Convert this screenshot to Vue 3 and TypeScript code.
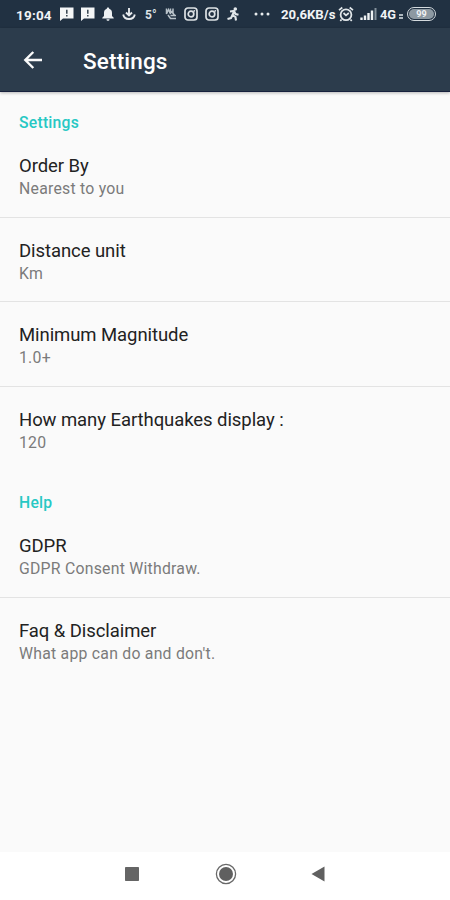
<script setup lang="ts">
interface Preference {
  title: string
  summary: string
}

interface Section {
  heading: string
  items: Preference[]
}

const sections: Section[] = [
  {
    heading: 'Settings',
    items: [
      { title: 'Order By', summary: 'Nearest to you' },
      { title: 'Distance unit', summary: 'Km' },
      { title: 'Minimum Magnitude', summary: '1.0+' },
      { title: 'How many Earthquakes display :', summary: '120' },
    ],
  },
  {
    heading: 'Help',
    items: [
      { title: 'GDPR', summary: 'GDPR Consent Withdraw.' },
      { title: 'Faq & Disclaimer', summary: "What app can do and don't." },
    ],
  },
]
</script>

<template>
  <div class="screen">
    <header class="status">
      <span class="slot clock"><span>19:04</span></span>
      <svg v-for="n in 2" :key="'c' + n" class="chat" viewBox="0 0 14 14">
        <path d="M0 .5h13.5v11H3L0 14z" fill="#f4f6f7" />
        <path d="M6.8 2.7v4M6.8 8v1.5" stroke="#33414d" stroke-width="1.5" />
      </svg>
      <svg class="bell" viewBox="0 0 12 14">
        <path d="M6 .5c.8 0 1.2.5 1.2 1.2C9.2 2.3 10 4 10 6v3l1.7 1.7v.8H.3v-.8L2 9V6c0-2 .8-3.7 2.8-4.3C4.800 1 5.200.5 6 .5zM4.500 12.200h3c0 1-.6 1.500-1.500 1.500s-1.500-.5-1.500-1.500z" fill="#eef1f3" />
      </svg>
      <svg class="anchor" viewBox="0 0 14 14">
        <path d="M7 1v7M4 5.5l3 3 3-3M1.200 7.500c.6 3 2.700 4.500 5.800 4.500s5.200-1.500 5.800-4.500" fill="none" stroke="#e6eaed" stroke-width="1.900" />
      </svg>
      <span class="slot degree"><span>5°</span></span>
      <svg class="vibrate" viewBox="0 0 12 14">
        <path d="M1.500 1.500V7l2-4.500L5.500 7V1.500M8 1.500V7M3 8l2.500 3.500H11M5.500 8.500H11M6.500 4L10 9" fill="none" stroke="#b8c2c9" stroke-width="1.500" />
      </svg>
      <svg v-for="n in 2" :key="'i' + n" class="camera" viewBox="0 0 14 14">
        <rect x="1" y="1" width="12" height="12" rx="3" fill="none" stroke="#dde2e5" stroke-width="1.700" />
        <circle cx="7" cy="7" r="2.800" fill="none" stroke="#dde2e5" stroke-width="1.700" />
        <circle cx="10.300" cy="3.800" r=".9" fill="#dde2e5" />
      </svg>
      <svg class="runner" viewBox="0 0 13 14">
        <circle cx="8.300" cy="2" r="1.800" fill="#e1e6e9" />
        <path d="M3 4.500l4-.5 1.500 3 3 .8M7 4.500L5.500 8l3 2 .5 3.500M5.500 8L4 11l-3.500 1" fill="none" stroke="#e1e6e9" stroke-width="2.100" />
      </svg>
      <svg class="dots" viewBox="0 0 16 4">
        <circle cx="2" cy="2" r="1.500" /><circle cx="8" cy="2" r="1.500" /><circle cx="14" cy="2" r="1.500" />
      </svg>
      <span class="slot speed"><span>20,6KB/s</span></span>
      <svg class="alarm" viewBox="0 0 16 16">
        <circle cx="8" cy="8.800" r="5.400" fill="none" stroke="#e1e6e9" stroke-width="1.800" />
        <path d="M1 4.200L4.300 1.500M15 4.200l-3.300-2.700M3.500 13.500L2.300 15M12.500 13.500l1.200 1.500M5.500 7L8 9.300 10.800 7" fill="none" stroke="#e1e6e9" stroke-width="1.700" />
      </svg>
      <svg class="signal" viewBox="0 0 17 12">
        <path d="M1.500 9.500V12M5 7.500V12M8.500 5V12M12 2.500V12" stroke="#eef1f3" stroke-width="2.400" />
        <path d="M15.500 0V12" stroke="#83909a" stroke-width="2" />
      </svg>
      <span class="slot network"><span>4G</span></span>
      <svg class="data" viewBox="0 0 4 5"><path d="M0 1h4M0 4h4" stroke="#aeb8bf" stroke-width="1.800" /></svg>
      <span class="battery"><span class="charge">99</span></span>
    </header>

    <div class="appbar">
      <svg class="back" viewBox="0 0 20 18">
        <path d="M19 9H2M10.300 1L2.300 9l8 8" fill="none" stroke="#fafafa" stroke-width="2.400" />
      </svg>
      <h1>Settings</h1>
    </div>

    <main>
      <section v-for="section in sections" :key="section.heading">
        <h2>{{ section.heading }}</h2>
        <div v-for="item in section.items" :key="item.title" class="item">
          <div class="title">{{ item.title }}</div>
          <div class="summary">{{ item.summary }}</div>
        </div>
      </section>
    </main>

    <nav class="navbar">
      <svg class="recent" viewBox="0 0 14 14"><rect width="14" height="14" rx=".7" fill="#656565" /></svg>
      <svg class="home" viewBox="0 0 22 22">
        <circle cx="11" cy="11" r="9.600" fill="none" stroke="#686868" stroke-width="1.300" />
        <circle cx="11" cy="11" r="7" fill="#606060" />
      </svg>
      <svg class="return" viewBox="0 0 14 16"><path d="M13.500.5v15L.5 8z" fill="#606060" /></svg>
    </nav>
  </div>
</template>

<style>
body {
  margin: 0;
}
</style>

<style scoped>
.screen {
  width: 450px;
  height: 900px;
  display: flex;
  flex-direction: column;
  overflow: hidden;
  background: #fafafa;
  font-family: Roboto, 'Liberation Sans', sans-serif;
}
svg {
  display: block;
  flex: none;
}
.status {
  flex: none;
  height: 28px;
  box-sizing: border-box;
  padding-left: 16px;
  display: flex;
  align-items: center;
  background: #213142;
  color: #f1f3f5;
  font-size: 13.5px;
  font-weight: 700;
  line-height: 28px;
  white-space: nowrap;
}
.slot {
  flex: none;
  height: 28px;
  padding-top: 1px;
  box-sizing: border-box;
}
.clock { width: 44px; letter-spacing: 0.2px; }
.chat { width: 14px; height: 14px; margin-right: 7px; }
.bell { width: 12px; height: 14px; }
.anchor { width: 14px; height: 14px; margin-left: 8px; }
.degree { width: 20px; margin-left: 9px; font-size: 12px; color: #dce1e5; }
.vibrate { width: 12px; height: 14px; }
.camera { width: 14px; height: 14px; margin-left: 7px; }
.runner { width: 13px; height: 14px; margin-left: 8px; }
.dots { width: 16px; height: 4px; margin-left: 14px; fill: #e8ecee; }
.speed { width: 57px; margin-left: 11px; font-size: 13.2px; }
.alarm { width: 16px; height: 16px; }
.signal { width: 17px; height: 12px; margin-left: 6px; }
.network { width: 19px; margin-left: 3px; font-size: 12.8px; }
.data { width: 4px; height: 5px; margin-top: 5px; }
.battery {
  flex: none;
  width: 29px;
  height: 14px;
  box-sizing: border-box;
  margin-left: 4px;
  padding: 1px;
  display: flex;
  border: 1.5px solid #d4dade;
  border-radius: 7px;
}
.charge {
  flex: 1;
  border-radius: 5px;
  background: #8d99a2;
  text-align: center;
  font-size: 9px;
  line-height: 10px;
}
.appbar {
  flex: none;
  height: 64px;
  box-sizing: border-box;
  padding: 2px 23px 0;
  display: flex;
  align-items: center;
  gap: 40px;
  position: relative;
  background: #2c3c4c;
  border-bottom: 1.5px solid #17213d;
  box-shadow: 0 1px 3px rgba(0, 0, 0, 0.28);
}
.back { width: 20px; height: 18px; margin-top: -2px; }
h1 {
  margin: 0;
  font-size: 22.5px;
  font-weight: 500;
  letter-spacing: 0.17px;
  line-height: 28px;
  color: #fff;
}
main {
  flex: none;
  height: 760px;
}
section {
  padding-top: 19px;
}
section + section {
  padding-top: 0;
  margin-top: 20px;
}
h2 {
  margin: 0;
  padding-left: 19px;
  font-size: 15.7px;
  letter-spacing: 0.25px;
  line-height: 24px;
  font-weight: 500;
  color: #27c8c4;
}
.item {
  height: 84.5px;
  box-sizing: border-box;
  padding: 21px 19px 0;
  border-bottom: 1.5px solid #e3e3e3;
}
.item:last-child {
  border-bottom: 0;
}
h2 + .item {
  height: 82.5px;
  padding-top: 19px;
}
.title {
  font-size: 18.5px;
  letter-spacing: -0.07px;
  line-height: 25px;
  color: #222;
}
.summary {
  margin-top: -1px;
  font-size: 15.8px;
  letter-spacing: 0.24px;
  line-height: 21px;
  color: #7b7b7b;
}
.navbar {
  flex: 1;
  padding-left: 125px;
  padding-bottom: 5px;
  display: flex;
  align-items: center;
  background: #fff;
}
.recent { width: 14px; height: 14px; }
.home { width: 22px; height: 22px; margin-left: 76px; }
.return { width: 14px; height: 16px; margin-left: 74px; }
</style>
